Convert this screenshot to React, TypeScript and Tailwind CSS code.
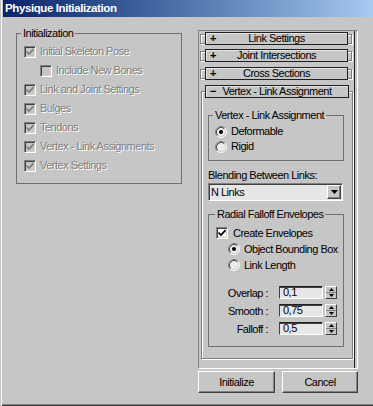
import React from "react";

const disabledText = "text-[#808080] [text-shadow:1px_1px_0_#ffffff]";

function CheckBox({ checked, disabled }: { checked: boolean; disabled?: boolean }) {
  return (
    <span
      className={`flex w-[12px] h-[12px] shrink-0 items-center justify-center border border-t-[#808080] border-l-[#808080] border-r-white border-b-white shadow-[inset_1px_1px_0_#404040,inset_-1px_-1px_0_#d4d0c8] ${
        disabled ? "bg-[#c6c6c6]" : "bg-white"
      }`}
    >
      {checked && (
        <svg width="8" height="8" viewBox="0 0 8 8">
          <path d="M0.5 3.5 L3 6 L7.5 1.2" fill="none" stroke={disabled ? "#808080" : "#000"} strokeWidth="1.7" />
        </svg>
      )}
    </span>
  );
}

function Radio({ checked }: { checked: boolean }) {
  return (
    <svg width="12" height="12" viewBox="0 0 12 12" className="shrink-0">
      <circle cx="6" cy="6" r="5" fill="#ececec" />
      <path d="M2.11 9.89 A5.5 5.5 0 0 1 9.89 2.11" fill="none" stroke="#808080" strokeWidth="1" />
      <path d="M9.89 2.11 A5.5 5.5 0 0 1 2.11 9.89" fill="none" stroke="#ffffff" strokeWidth="1" />
      <path d="M2.82 9.18 A4.5 4.5 0 0 1 9.18 2.82" fill="none" stroke="#404040" strokeWidth="1" />
      <path d="M9.18 2.82 A4.5 4.5 0 0 1 2.82 9.18" fill="none" stroke="#d4d0c8" strokeWidth="1" />
      {checked && <circle cx="6" cy="6" r="2" fill="#000" />}
    </svg>
  );
}

function Rollout({ title }: { title: string }) {
  return (
    <div className="relative h-[13px] ml-[1px] w-[152px]">
      <div className="absolute inset-x-0 top-[2px] bottom-[1px] border border-[#808080] shadow-[inset_1px_1px_0_#ffffff,1px_1px_0_#ffffff]" />
      <div className="relative ml-[5px] w-[143px] h-full grid grid-cols-[14px_1fr_14px] items-center border border-[#202020] bg-[#c6c6c6] shadow-[inset_1px_1px_0_#e4e4e4] leading-[11px]">
        <span className="pl-[4px] font-bold">+</span>
        <span className="text-center">{title}</span>
        <span />
      </div>
    </div>
  );
}

function GroupLabel({ children, ml }: { children: React.ReactNode; ml: string }) {
  return <div className={`-mt-[7px] ${ml} w-fit px-[2px] bg-[#c6c6c6] leading-[12px]`}>{children}</div>;
}

function SpinRow({ label, value, mt }: { label: string; value: string; mt: string }) {
  return (
    <div className={`flex h-[13px] items-center ${mt}`}>
      <span className="w-[52px] text-right leading-[12px]">{label}</span>
      <div className="ml-[11px] w-[44px] h-[13px] bg-[#e6e6e6] border border-t-[#202020] border-l-[#404040] border-r-white border-b-white shadow-[inset_0_1px_0_#404040] pl-[3px] leading-[11px]">
        {value}
      </div>
      <div className="ml-[2px] w-[12px] h-[13px] flex flex-col border border-t-white border-l-white border-r-[#404040] border-b-[#404040] bg-[#c6c6c6]">
        <div className="flex-1 flex items-center justify-center border-b border-[#808080]">
          <svg width="5" height="3" viewBox="0 0 5 3">
            <path d="M2.5 0 L5 3 L0 3 Z" fill="#000" />
          </svg>
        </div>
        <div className="flex-1 flex items-center justify-center">
          <svg width="5" height="3" viewBox="0 0 5 3">
            <path d="M0 0 L5 0 L2.5 3 Z" fill="#000" />
          </svg>
        </div>
      </div>
    </div>
  );
}

function Btn({ label, w }: { label: string; w: string }) {
  return (
    <div
      className={`${w} h-[22px] flex items-center justify-center border border-t-white border-l-white border-r-[#404040] border-b-[#404040] shadow-[inset_-1px_-1px_0_#808080] bg-[#c6c6c6]`}
    >
      {label}
    </div>
  );
}

export default function App() {
  const leftItems: { label: string; indent?: boolean }[] = [
    { label: "Initial Skeleton Pose" },
    { label: "Include New Bones", indent: true },
    { label: "Link and Joint Settings" },
    { label: "Bulges" },
    { label: "Tendons" },
    { label: "Vertex - Link Assignments" },
    { label: "Vertex Settings" },
  ];
  return (
    <div className="w-[373px] h-[406px] bg-[#c6c6c6] overflow-hidden shadow-[inset_1px_0_0_#c6c6c6,inset_2px_0_0_#f4f4f4,inset_0_-1px_0_#404040,inset_0_-2px_0_#808080] font-['Liberation_Sans',Arial,sans-serif] text-[11px] tracking-[-0.5px] text-black flex flex-col">
      <div className="ml-[3px] h-[17px] shrink-0 bg-linear-to-r from-[#0a246a] to-[#a6caf0] flex items-center pl-[2px] text-white font-bold text-[11.5px] tracking-[-0.4px]">
        Physique Initialization
      </div>
      <div className="flex">
        {/* Left group */}
        <div className="mt-[16px] ml-[16px] w-[166px] h-[151px] border border-[#707070] shrink-0 pl-[7px]">
          <GroupLabel ml="-ml-[3px]">Initialization</GroupLabel>
          <div className="mt-[3px] flex flex-col">
            {leftItems.map((it) => (
              <div key={it.label} className={`h-[19px] flex items-center gap-[4px] ${it.indent ? "pl-[16px]" : ""}`}>
                <CheckBox checked={!it.indent} disabled />
                <span className={disabledText}>{it.label}</span>
              </div>
            ))}
          </div>
        </div>

        {/* Right column */}
        <div className="ml-[16px] mt-[13px] w-[160px] flex flex-col shrink-0">
          <div className="h-[339px] flex border border-t-[#808080] border-l-[#808080] border-r-white border-b-white">
            <div className="w-[155px] flex flex-col">
              <div className="mt-[1px]">
                <Rollout title="Link Settings" />
              </div>
              <div className="mt-[4px]">
                <Rollout title="Joint Intersections" />
              </div>
              <div className="mt-[5px]">
                <Rollout title="Cross Sections" />
              </div>
              {/* Expanded rollout */}
              <div className="mt-[5px] ml-[2px] w-[152px] flex flex-col">
                <div className="relative z-10 ml-[4px] w-[144px] h-[13px] grid grid-cols-[14px_1fr_14px] items-center border border-[#202020] bg-[#c6c6c6] shadow-[inset_1px_1px_0_#e4e4e4] leading-[11px]">
                  <span className="pl-[4px] font-bold">−</span>
                  <span className="text-center">Vertex - Link Assignment</span>
                  <span />
                </div>
                <div className="-mt-[7px] h-[268px] border border-[#808080] shadow-[inset_1px_1px_0_#ffffff,1px_1px_0_#ffffff] pt-[23px] pl-[6px] flex flex-col">
                  <div className="w-[136px] h-[46px] border border-[#707070] pl-[6px]">
                    <GroupLabel ml="-ml-[2px]">Vertex - Link Assignment</GroupLabel>
                    <div className="mt-[3px] flex flex-col">
                      <div className="h-[15px] flex items-center gap-[4px]">
                        <Radio checked />
                        <span>Deformable</span>
                      </div>
                      <div className="h-[15px] flex items-center gap-[4px]">
                        <Radio checked={false} />
                        <span>Rigid</span>
                      </div>
                    </div>
                  </div>
                  <div className="mt-[8px] leading-[12px]">Blending Between Links:</div>
                  <div className="mt-[2px] w-[135px] h-[18px] flex bg-[#e6e6e6] border border-t-[#808080] border-l-[#808080] border-r-white border-b-white shadow-[inset_1px_1px_0_#404040]">
                    <span className="flex-1 pl-[2px] leading-[16px]">N Links</span>
                    <div className="mt-[1px] mr-[1px] w-[14px] h-[14px] flex items-center justify-center border border-t-white border-l-white border-r-[#404040] border-b-[#404040] shadow-[inset_-1px_-1px_0_#808080] bg-[#c6c6c6]">
                      <svg width="7" height="4" viewBox="0 0 7 4">
                        <path d="M0 0 L7 0 L3.5 4 Z" fill="#000" />
                      </svg>
                    </div>
                  </div>
                  <div className="mt-[13px] w-[136px] h-[133px] border border-[#707070] pl-[7px]">
                    <GroupLabel ml="-ml-[1px]">Radial Falloff Envelopes</GroupLabel>
                    <div className="mt-[5px] flex flex-col">
                      <div className="h-[16px] flex items-center gap-[5px]">
                        <CheckBox checked />
                        <span>Create Envelopes</span>
                      </div>
                      <div className="h-[16px] pl-[12px] flex items-center gap-[4px]">
                        <Radio checked />
                        <span>Object Bounding Box</span>
                      </div>
                      <div className="h-[16px] pl-[12px] flex items-center gap-[4px]">
                        <Radio checked={false} />
                        <span>Link Length</span>
                      </div>
                    </div>
                    <SpinRow label="Overlap :" value="0,1" mt="mt-[13px]" />
                    <SpinRow label="Smooth :" value="0,75" mt="mt-[5px]" />
                    <SpinRow label="Falloff :" value="0,5" mt="mt-[5px]" />
                  </div>
                </div>
              </div>
            </div>
            <div className="w-[1px] bg-[#202020]" />
          </div>
          <div className="mt-[2px] flex gap-[7px]">
            <Btn label="Initialize" w="w-[77px]" />
            <Btn label="Cancel" w="w-[76px]" />
          </div>
        </div>
      </div>
    </div>
  );
}
